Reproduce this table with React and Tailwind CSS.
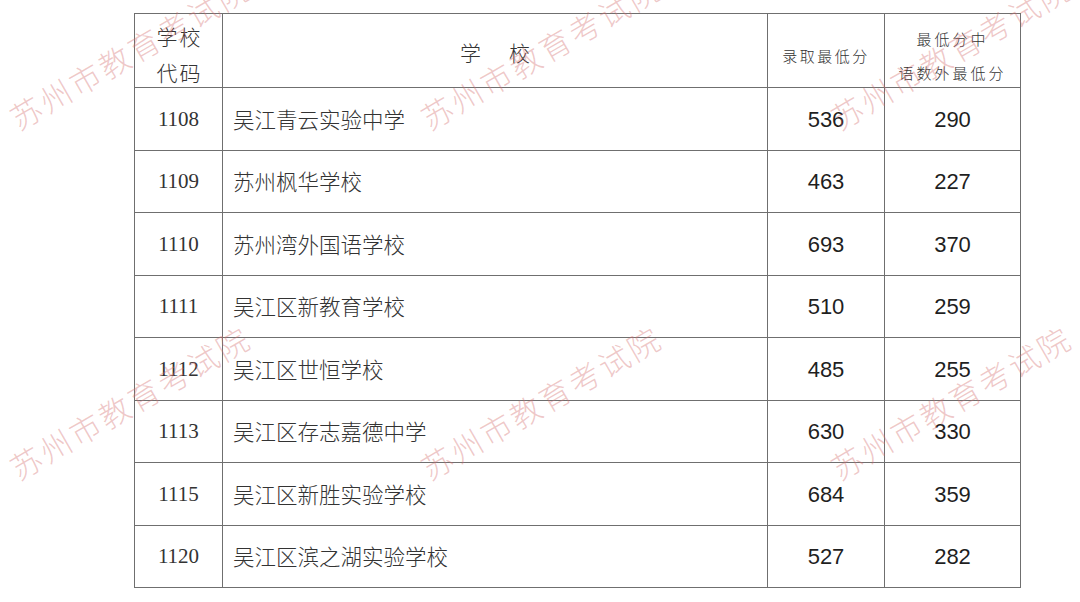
import React from 'react';

const rows = [
  { code: '1108', name: '吴江青云实验中学', min: 536, sub: 290 },
  { code: '1109', name: '苏州枫华学校', min: 463, sub: 227 },
  { code: '1110', name: '苏州湾外国语学校', min: 693, sub: 370 },
  { code: '1111', name: '吴江区新教育学校', min: 510, sub: 259 },
  { code: '1112', name: '吴江区世恒学校', min: 485, sub: 255 },
  { code: '1113', name: '吴江区存志嘉德中学', min: 630, sub: 330 },
  { code: '1115', name: '吴江区新胜实验学校', min: 684, sub: 359 },
  { code: '1120', name: '吴江区滨之湖实验学校', min: 527, sub: 282 },
];

const marks = [
  'left-[12px] top-[104px]',
  'left-[423px] top-[104px]',
  'left-[833px] top-[104px]',
  'left-[12px] top-[454px]',
  'left-[423px] top-[454px]',
  'left-[833px] top-[454px]',
];

const serif = "font-['Liberation_Serif','Noto_Sans_CJK_SC',serif]";
const cjk = "font-['Noto_Sans_CJK_SC',sans-serif]";
const sans = "font-['Liberation_Sans',Arial,sans-serif]";

export default function App() {
  return (
    <div className="relative w-[1080px] h-[602px] overflow-hidden bg-white pl-[134px] pt-[13px]">
      {/* Table */}
      <div className="grid w-[887px] grid-cols-[88px_545px_117px_136px] grid-rows-[74px_63px_62px_63px_62px_63px_62px_63px_62px] border-l border-t border-[#6f6f6f] text-[#333]">
        {/* Header */}
        <div className={`flex flex-col items-center justify-center border-r border-b border-[#6f6f6f] ${cjk} font-light text-[21px] leading-[36px] tracking-[2px] pl-[2px] pt-[7px]`}>
          <span>学校</span>
          <span>代码</span>
        </div>
        <div className={`flex items-center justify-center gap-[28px] border-r border-b border-[#6f6f6f] ${cjk} font-light text-[21px] pt-[5px]`}>
          <span>学</span>
          <span>校</span>
        </div>
        <div className={`flex items-center justify-center border-r border-b border-[#6f6f6f] ${cjk} font-light text-[15px] tracking-[2.5px] pt-[12px]`}>
          录取最低分
        </div>
        <div className={`flex flex-col items-center justify-center border-r border-b border-[#6f6f6f] ${cjk} font-light text-[15px] leading-[34px] tracking-[3px] pt-[10px]`}>
          <span>最低分中</span>
          <span>语数外最低分</span>
        </div>

        {rows.map((r) => (
          <React.Fragment key={r.code}>
            <div className={`flex items-center justify-center border-r border-b border-[#6f6f6f] ${serif} text-[21px] pt-[1px]`}>
              {r.code}
            </div>
            <div className={`flex items-center border-r border-b border-[#6f6f6f] pl-[10px] ${cjk} font-light text-[21.5px]`}>
              {r.name}
            </div>
            <div className={`flex items-center justify-center border-r border-b border-[#6f6f6f] ${sans} text-[22px] text-[#1f1f1f]`}>
              {r.min}
            </div>
            <div className={`flex items-center justify-center border-r border-b border-[#6f6f6f] ${sans} text-[22px] text-[#1f1f1f]`}>
              {r.sub}
            </div>
          </React.Fragment>
        ))}
      </div>

      {/* Watermarks */}
      <div className="pointer-events-none absolute inset-0">
        {marks.map((pos) => (
          <span
            key={pos}
            className={`absolute ${pos} origin-left -rotate-30 whitespace-nowrap ${cjk} font-light text-[31px] leading-[31px] tracking-[3px] text-[rgba(212,110,110,0.38)]`}
          >
            苏州市教育考试院
          </span>
        ))}
      </div>
    </div>
  );
}
